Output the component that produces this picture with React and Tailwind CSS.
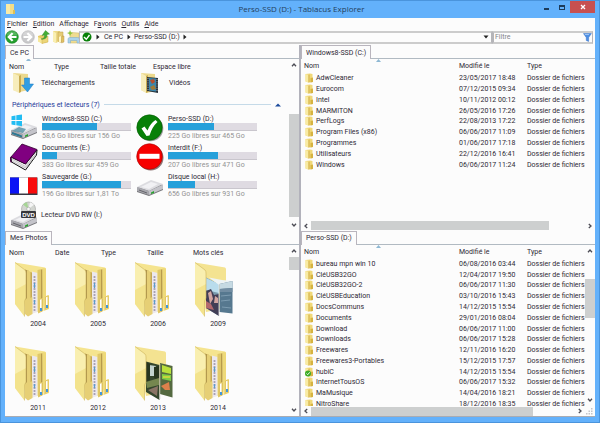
import React, { useState } from "react";

const systemFiles = [
  ["AdwCleaner", "23/05/2017 18:48"],
  ["Eurocom", "07/12/2015 09:34"],
  ["Intel", "10/11/2012 00:12"],
  ["MARMITON", "26/05/2016 17:26"],
  ["PerfLogs", "22/08/2013 17:22"],
  ["Program Files (x86)", "06/06/2017 11:09"],
  ["Programmes", "01/06/2017 17:18"],
  ["Utilisateurs", "22/12/2016 16:41"],
  ["Windows", "06/06/2017 11:24"],
];

const persoFiles = [
  ["bureau mpn win 10", "06/08/2016 03:44"],
  ["CléUSB32GO", "12/04/2017 19:50"],
  ["CléUSB32GO-2", "06/06/2017 11:30"],
  ["CléUSBEducation", "03/10/2016 15:43"],
  ["DocsCommuns", "14/12/2015 15:54"],
  ["Documents", "29/01/2016 08:04"],
  ["Download", "06/06/2017 11:00"],
  ["Downloads", "06/06/2017 15:28"],
  ["Freewares", "12/11/2016 16:20"],
  ["Freewares3-Portables", "15/12/2015 17:57"],
  ["hubiC", "14/12/2015 15:54"],
  ["InternetTousOS", "06/06/2017 15:32"],
  ["MaMusique", "14/04/2016 18:21"],
  ["NitroShare", "18/12/2016 18:35"],
];

const drives = [
  { name: "Windows8-SSD (C:)", info: "58,6 Go libres sur 156 Go", used: 62, icon: WindowsDriveIcon },
  { name: "Perso-SSD (D:)", info: "225 Go libres sur 465 Go", used: 52, icon: CheckIcon },
  { name: "Documents (E:)", info: "383 Go libres sur 459 Go", used: 17, icon: BookIcon },
  { name: "Interdit (F:)", info: "207 Go libres sur 471 Go", used: 56, icon: NoEntryIcon },
  { name: "Sauvegarde (G:)", info: "196 Go libres sur 1,81 To", used: 89, icon: FlagIcon },
  { name: "Disque local (H:)", info: "656 Go libres sur 931 Go", used: 30, icon: DriveIcon },
];

const photos = [
  ["2004", "docs"],
  ["2005", "docs"],
  ["2006", "docs"],
  ["2009", "sea"],
  ["2011", "docs"],
  ["2012", "docs"],
  ["2013", "park"],
  ["2014", "docs"],
];

const menus = [
  ["", "F", "ichier"],
  ["", "E", "dition"],
  ["Aff", "i", "chage"],
  ["F", "a", "voris"],
  ["", "O", "utils"],
  ["", "A", "ide"],
];

/* ---------- icons ---------- */

function DriveShape() {
  return (
    <>
      <path d="M1 20 L15 13 L27 17 L27 22 L13 28 L1 24Z" fill="#77777b" />
      <path d="M1 19 L15 12 L27 16 L13 23Z" fill="#dcdce0" />
      <path d="M5 19 L15 14 L22 16 L13 21Z" fill="#f1f1f4" />
      <path d="M1 19 L13 23 L13 27 L1 23Z" fill="#a8a8ae" />
      <path d="M13 23 L27 16.500 L27 21 L13 27Z" fill="#c4c4ca" />
      <path d="M3 22 L11 25" stroke="#65656b" strokeWidth="1" />
      <path d="M15 24.500 L18 23 L18 25 L15 26Z" fill="#26a32d" />
    </>
  );
}

function DriveIcon() {
  return (
    <svg viewBox="0 0 28 28" className="size-7" aria-hidden="true">
      <g transform="translate(0 -4)">
        <DriveShape />
      </g>
    </svg>
  );
}

function WindowsDriveIcon() {
  return (
    <svg viewBox="0 0 28 28" className="size-7" aria-hidden="true">
      <g transform="translate(0 -3)">
        <DriveShape />
        <path d="M2 20 L9 16 L16 18 L13 22Z" fill="#3f8298" opacity=".7" />
        <path d="M2 21 L12 24.500 L12 26.500 L2 23Z" fill="#2b7995" />
      </g>
      <path d="M1.500 2.200 L5.500 1.500 V6 H1.500Z M6.300 1.300 L12 .4 V6 H6.300Z M1.500 6.900 H5.500 V11.200 L1.500 10.600Z M6.300 6.900 H12 V12.200 L6.300 11.300Z" fill="#22bdf3" />
    </svg>
  );
}

function DvdIcon() {
  return (
    <svg viewBox="0 0 28 28" className="size-7" aria-hidden="true">
      <DriveShape />
      <circle cx="18.500" cy="8" r="7" fill="#d2d5d0" stroke="#9a9a9a" strokeWidth=".6" />
      <path d="M18.500 8 L13 3.500 A7 7 0 0 1 17 1.200Z" fill="#a6d595" />
      <path d="M18.500 8 L20 1.200 A7 7 0 0 1 24 3.800Z" fill="#f5f5f5" />
      <circle cx="18.500" cy="8" r="1.800" fill="#f8f8f8" stroke="#999" strokeWidth=".5" />
      <rect x="11" y="10" width="15" height="7" rx="1" fill="#37373b" />
      <text x="18.500" y="15.800" textAnchor="middle" fontSize="6" fontWeight="700" fontFamily="Liberation Sans, sans-serif" fill="#fff">DVD</text>
    </svg>
  );
}

function CheckIcon() {
  return (
    <svg viewBox="0 0 28 28" className="size-7" aria-hidden="true">
      <circle cx="14.500" cy="14.500" r="12.800" fill="#9b9b9b" />
      <circle cx="13.500" cy="13.500" r="12.700" fill="#078007" stroke="#035c03" strokeWidth=".6" />
      <path d="M5.500 14.500 L8.500 12.500 L11.500 16.500 Q14 9.500 19.500 6 L21.500 8 Q16 13 13.500 21.500 L10.500 22Z" fill="#fff" />
    </svg>
  );
}

function NoEntryIcon() {
  return (
    <svg viewBox="0 0 28 28" className="size-7" aria-hidden="true">
      <circle cx="14.700" cy="14.700" r="12.800" fill="#8d7777" />
      <circle cx="13.500" cy="13.500" r="12.800" fill="#f60000" stroke="#a80000" strokeWidth=".6" />
      <rect x="3.500" y="10.800" width="20" height="5" fill="#fff" />
    </svg>
  );
}

function BookIcon() {
  return (
    <svg viewBox="0 0 28 28" className="size-7" aria-hidden="true" strokeLinejoin="round">
      <path d="M1 14 L15.500 21 L27 7 L26.500 12 L15.500 27 L1.500 19Z" fill="#f3f0f3" stroke="#111" strokeWidth="1" />
      <path d="M2 16 L15.500 23.500 L26 10.500 M2 18 L15.500 25 L26 12" fill="none" stroke="#aaa" strokeWidth=".6" />
      <path d="M1 14 L12 1 L27 6.500 L15.500 21Z" fill="#800080" stroke="#32002f" strokeWidth=".8" />
      <path d="M1 14 Q-.5 17 1.500 19.500" fill="none" stroke="#4f004d" strokeWidth="1.200" />
    </svg>
  );
}

function FlagIcon() {
  return (
    <svg viewBox="0 0 28 28" className="size-7" aria-hidden="true">
      <rect x="0" y="5.500" width="27.500" height="17.500" fill="#383842" />
      <rect x="0" y="5.500" width="9" height="16" fill="#0b14f5" />
      <rect x="9" y="5.500" width="9" height="16" fill="#fff" />
      <rect x="18" y="5.500" width="9" height="16" fill="#f80b0b" />
    </svg>
  );
}

function DownloadFolderIcon() {
  return (
    <svg viewBox="0 0 22 22" className="size-[22px]" aria-hidden="true">
      <path d="M1 1 L16 2 V18 L8 20 L1 18Z" fill="#ecd98d" />
      <path d="M1 1 L7 4 V21 L1 18Z" fill="#f7edbb" />
      <path d="M7 4 L9 3 V20 L7 21Z" fill="#c8ab51" />
      <path d="M12.500 6 H17.500 V12 H21.500 L15.500 20 L9.500 13 H12.500Z" fill="#2f9de2" stroke="#1c78c0" strokeWidth=".5" />
    </svg>
  );
}

function VideoFolderIcon() {
  return (
    <svg viewBox="0 0 22 22" className="size-[22px]" aria-hidden="true">
      <path d="M1 1 L15 2 V19 L7 21 L1 18Z" fill="#ecd98d" />
      <path d="M1 1 L6 4 V21 L1 18Z" fill="#f7edbb" />
      <path d="M6 4 L8 3 V20 L6 21Z" fill="#c8ab51" />
      <path d="M7 5 L18 6 V21 L7 19Z" fill="#28323b" />
      <path d="M9 6 L16 6.500 V19.500 L9 18.500Z" fill="#3a86ad" />
      <path d="M10 8 L14 7 L15 10 L12 12Z" fill="#b64e2c" />
      <path d="M10 15 L14 13 L16 17 L12 18Z" fill="#a27a35" />
      <path d="M8 6 V19 M17 7 V20" stroke="#ddd" strokeWidth=".7" strokeDasharray="1 1.200" />
    </svg>
  );
}

function SmallFolder({ synced }) {
  return (
    <svg viewBox="0 0 9 10" className="h-[10px] w-[9px] shrink-0" aria-hidden="true">
      <path d="M.5 1 L5 .5 L7.500 1 V9 L3.500 9.500 L.5 8.500Z" fill="#f0d878" />
      <path d="M.5 1 L3.500 2 V9.500 L.5 8.500Z" fill="#f8eba4" />
      <path d="M3.500 2 L4.500 1.500 V9.200 L3.500 9.500Z" fill="#cfae49" />
      <path d="M5.500 5 L8 4.500 V9 L5.500 9.500Z" fill="#d6b341" />
      {synced && (
        <>
          <circle cx="3" cy="6.500" r="3" fill="#3dac28" />
          <path d="M1.500 6.500 L2.700 7.700 L4.700 5.300" fill="none" stroke="#fff" strokeWidth=".9" />
        </>
      )}
    </svg>
  );
}

function BigFolder({ kind }) {
  return (
    <svg viewBox="0 0 40 56" className="h-14 w-10" aria-hidden="true">
      {kind === "docs" ? (
        <>
          <path d="M1 .5 L28 5 Q32 5 32 7 V36 L28 50 L12 50Z" fill="#f5e48f" />
          <path d="M11 7.500 L15 9 V52 L11 50Z" fill="#a98f49" />
          <path d="M18 9.500 L23.500 11 V50 L17 52Z" fill="#ece8ee" />
          <path d="M20.500 14 V49" stroke="#a9a1b3" strokeWidth="1.800" strokeDasharray="2 1" />
          <path d="M20.500 21 V26 M20.500 38 V42" stroke="#5c9cc8" strokeWidth="1.300" />
          <path d="M13 8 L18 10.500 V34 L18.500 36 V52 L14 54.500 L11 52 V38 L13 36Z" fill="#e6cf75" />
          <path d="M16.500 10 L18 10.800 V35 L16.500 36Z" fill="#c5a954" />
          <path d="M23.500 8 L28 7 V36 L29 37 V49 L24 51.500Z" fill="#e0c869" />
          <path d="M27 8 L28.500 7 V36 L27 37Z" fill="#b79b4c" />
          <path d="M28.500 6 L32 6.500 V34 L35 33 V47 L29.500 49Z" fill="#eed978" />
          <path d="M25.500 37.500 L28 36.500 V49 L25.500 50Z M31.500 35 L34 34 V46 L31.500 47.200Z" fill="#fff" stroke="#dcbc50" strokeWidth=".8" />
          <path d="M26 46 H28 V49 H26Z M32 43 H34 V46 H32Z" fill="#4196db" />
        </>
      ) : (
        <path d="M1 .5 L28 5 Q32 5 32 7 V46 L12 50Z" fill="#f4e391" />
      )}
      {kind === "sea" && (
        <>
          <path d="M12 15.500 L25 22 V54 L12 46Z" fill="#7a9bad" />
          <path d="M12 16 L25 22 V31 L12 28Z" fill="#b9dcec" />
          <path d="M12 29 L17 27 L20 33 L25 32 V54 L12 46Z" fill="#413e56" />
          <path d="M14 31 L17 29 L19 37 L16 42Z M21 34 L24 36 V41 L20 41Z" fill="#d2a6a2" />
          <path d="M12 39 L17 42 L20 48 L12 46Z" fill="#b2686e" />
          <path d="M15 15.500 L28 18 L38 19 L25 23Z" fill="#eef4f5" />
          <path d="M25.500 22 L38.500 19 V51.500 L25.500 50Z" fill="#56788f" />
          <path d="M25.500 22 L38.500 19 V26 L25.500 27Z" fill="#c6dae3" />
          <path d="M25.500 27 L38.500 26 V30 L25.500 30Z" fill="#728da2" />
          <path d="M27 34 L37 33 M27 39 L36 38 M28 45 L37 46" stroke="#7d9cb1" strokeWidth="1" />
          <path d="M25 22 V54" stroke="#e4e4e5" strokeWidth=".8" />
        </>
      )}
      {kind === "park" && (
        <>
          <path d="M12 15.500 L25.500 19 V54 L12 46Z" fill="#34462d" />
          <path d="M15 19 L22 20 L23 30 L15 30Z" fill="#c3d3cf" />
          <path d="M12 16 L16 18 V34 L12 36Z M20 21 L25 20 V34 L20 32Z" fill="#27351f" />
          <path d="M12 36 L25 32 V39 L13 42Z" fill="#75874f" />
          <path d="M14 44 L24 40 L23 50Z" fill="#897365" />
          <path d="M26 17 L38.500 20 V51.500 L26 48Z" fill="#546940" />
          <path d="M28 19 L37 22 V28 L28 26Z" fill="#b9e03c" />
          <path d="M28 28 L37 29 V35 L28 33Z" fill="#7fce45" />
          <path d="M27 40 L35 36 L36 44 L31 44Z" fill="#de804b" />
          <path d="M29 31 H36" stroke="#f6dc38" strokeWidth="1.200" />
          <path d="M25.800 18 V53" stroke="#d1cfc6" strokeWidth=".8" />
        </>
      )}
      <path d="M1 .5 L11 8 Q12 9 12 11 V36 L10.500 39 V54.500 L1 42Z" fill="#f9efb0" />
      <path d="M1 28 L12 22 V36 L10.500 39 V54.500 L1 42Z" fill="#efda76" opacity=".6" />
      <path d="M1 .5 L11 8 Q12 9 12 11 V36 L10.500 39 V54.500" fill="none" stroke="#cdb45b" strokeWidth=".6" />
    </svg>
  );
}

function NavIcon({ flip, active }) {
  return (
    <svg viewBox="0 0 14 14" className="size-[14px]" aria-hidden="true">
      <circle cx="7" cy="7" r="6.300" fill={active ? "#25a02f" : "#c9c9cb"} stroke={active ? "#16821f" : "#b4b4b6"} strokeWidth=".6" />
      <path d="M1.500 5.500 A5.700 5.700 0 0 1 12.500 5.500Z" fill="#fff" opacity=".22" />
      <path transform={flip ? "rotate(180 7 7)" : undefined} d="M2.200 7 L6.800 2.400 L8.400 3.800 L6.300 5.900 H11.500 V8.100 H6.300 L8.400 10.200 L6.800 11.600Z" fill="#fff" />
    </svg>
  );
}

function FolderUpIcon() {
  return (
    <svg viewBox="0 0 13 14" className="h-[14px] w-[13px]" aria-hidden="true">
      <path d="M1 6 L4 5 L10 6 L11 12 L5 13.500 L1 11Z" fill="#e6ca67" />
      <path d="M1 7 L5 9 V13.500 L1 11.500Z" fill="#f7e99a" />
      <path d="M5 9 L11 6 V12 L5 13.500Z" fill="#ecd679" stroke="#c7a43e" strokeWidth=".4" />
      <path d="M4 9 Q8 9 7.500 5 L5 5.500 L8.500 .5 L12.500 4 L10 4.500 Q10 10 4 9Z" fill="#45ad36" stroke="#27841f" strokeWidth=".4" />
    </svg>
  );
}

function FoldersIcon() {
  return (
    <svg viewBox="0 0 13 14" className="h-[14px] w-[13px]" aria-hidden="true">
      <path d="M1 1 L8 1 V11 L4 13 L1 11.500Z" fill="#edd987" />
      <path d="M1 1 L4 3 V13 L1 11.500Z" fill="#f9efb3" />
      <path d="M6 2 L11 2 V11 L8 12.500 L6 11Z" fill="#e5cc76" stroke="#bf9e4b" strokeWidth=".5" />
      <path d="M10 6 L12 6 V12 L9.500 13Z" fill="#e4c566" stroke="#ab8a3e" strokeWidth=".4" />
      <path d="M7 7 L9 6 V12 L7 13Z" fill="#fff5c7" />
    </svg>
  );
}

function NewFolderIcon() {
  return (
    <svg viewBox="0 0 13 14" className="h-[14px] w-[13px]" aria-hidden="true">
      <path d="M3 4 L5 2.500 L12 3 V13 H3Z" fill="#efdc91" stroke="#cbb463" strokeWidth=".5" />
      <path d="M1 9 Q1 7.500 3 7.500 H10.500 Q12.500 7.500 12.500 9 V13 H10 V10.500 H3.500 V13 H1Z" fill="#a9d3ec" stroke="#78a9c8" strokeWidth=".5" />
      <path d="M3 0 L4 2.200 L6 3 L4 4 L3 6 L2.200 4 L0 3 L2.200 2.200Z" fill="#8dc63d" />
    </svg>
  );
}

function Chevron({ dir }) {
  const turn = { up: 0, right: 90, down: 180, left: 270 }[dir];
  return (
    <svg viewBox="0 0 6 6" className="size-[6px]" aria-hidden="true">
      <path transform={`rotate(${turn} 3 3)`} d="M1 4.200 L3 2 L5 4.200" fill="none" stroke="#4c4c55" strokeWidth="1.300" />
    </svg>
  );
}

function Triangle() {
  return (
    <svg viewBox="0 0 4 6" className="h-[6px] w-1" aria-hidden="true">
      <path d="M.5 .5 L3.500 3 L.5 5.500Z" fill="#222" />
    </svg>
  );
}

/* ---------- shared pieces ---------- */

function VerticalScroll({ before, thumb, after }) {
  return (
    <div className="flex w-[10px] shrink-0 flex-col items-center bg-[#fcfcfc]">
      <button aria-label="Défiler vers le haut" className="flex h-3 w-full items-center justify-center">
        <Chevron dir="up" />
      </button>
      <div className="flex w-full grow flex-col">
        <div className={before} />
        <div className={`w-full bg-[#cdcfcf] ${thumb}`} />
        <div className={after} />
      </div>
      <button aria-label="Défiler vers le bas" className="flex h-3 w-full items-center justify-center">
        <Chevron dir="down" />
      </button>
    </div>
  );
}

function HorizontalScroll({ thumb, grip }) {
  return (
    <div className="flex h-[10px] shrink-0 items-center">
      <button aria-label="Défiler vers la gauche" className="flex h-full w-[10px] items-center justify-center">
        <Chevron dir="left" />
      </button>
      <div className="h-[9px] grow">
        <div className={`h-full bg-[#cdcfcf] ${thumb}`} />
      </div>
      <button aria-label="Défiler vers la droite" className="flex h-full w-[10px] items-center justify-center">
        <Chevron dir="right" />
      </button>
      {grip && (
        <svg viewBox="0 0 10 10" className="size-[10px]" aria-hidden="true">
          <path d="M6 2h1.500v1.500H6zM6 4.500h1.500V6H6zM3.500 4.500H5V6H3.500zM6 7h1.500v1.500H6zM3.500 7H5v1.500H3.500zM1 7h1.500v1.500H1z" fill="#c4c4c8" />
        </svg>
      )}
    </div>
  );
}

function Pane({ tab, children }) {
  return (
    <section className="flex min-h-0 flex-1 flex-col">
      <div className="flex h-[14px] shrink-0 border-b border-[#b1bac2]">
        <button className="-mb-px border border-b-0 border-[#b9b5bd] bg-[#fcfcfc] px-1 leading-3">
          {tab}
        </button>
      </div>
      {children}
    </section>
  );
}

function FileTable({ rows, height }) {
  return (
    <table className={`w-full table-fixed border-collapse ${height}`}>
      <colgroup>
        <col className="w-[154px]" />
        <col className="w-[68px]" />
        <col />
      </colgroup>
      <thead>
        <tr className="h-[14px] text-left">
          <th className="relative pl-[3px] font-normal">
            <span className="absolute inset-x-0 top-0 flex justify-center">
              <svg viewBox="0 0 5 3" className="h-[3px] w-[5px]" aria-hidden="true">
                <path d="M0 3 L2.500 0 L5 3Z" fill="#8eb8d3" />
              </svg>
            </span>
            Nom
          </th>
          <th className="pl-1 font-normal">Modifié le</th>
          <th className="pl-1 font-normal">Type</th>
        </tr>
      </thead>
      <tbody>
        {rows.map(([name, date]) => (
          <tr key={name} className="leading-[10px] whitespace-nowrap">
            <td className="p-0 pl-1">
              <span className="flex items-center gap-0.5">
                <SmallFolder synced={name === "hubiC"} />
                {name}
              </span>
            </td>
            <td className="p-0 pl-1">{date}</td>
            <td className="p-0 pl-1">Dossier de fichiers</td>
          </tr>
        ))}
      </tbody>
    </table>
  );
}

function Tile({ drive }) {
  const Icon = drive.icon;
  return (
    <li className="flex h-[29px] items-center gap-1">
      <Icon />
      <div className="w-[89px]">
        <p className="leading-[8px]">{drive.name}</p>
        <div className="h-2 border-b border-[#c9c6cd] bg-[#dfdbe2]">
          <div className="h-[7px] bg-[#26a0da]" style={{ width: `${drive.used}%` }} />
        </div>
        <p className="leading-[10px] whitespace-nowrap text-[#929292]">{drive.info}</p>
      </div>
    </li>
  );
}

/* ---------- window ---------- */

function TitleBar() {
  return (
    <header className="flex h-[17px] shrink-0 items-start">
      <div className="flex w-[60px] pt-[3px]">
        <svg viewBox="0 0 10 10" className="size-[10px]" aria-hidden="true">
          <path d="M1 0 H9 V10 H1Z" fill="#f3dd86" />
          <path d="M1 0 H5 V10 H1Z" fill="#f9eaa6" />
          <path d="M8 6 H10 V10 H8Z" fill="#dfbf56" />
        </svg>
      </div>
      <h1 className="grow text-center font-['Open_Sans','Noto_Sans',sans-serif] text-[8px] leading-4 text-[#243f5c]">
        Perso-SSD (D:) - Tablacus Explorer
      </h1>
      <div className="flex">
        <button aria-label="Réduire" className="flex h-3 w-4 items-center justify-center pt-1">
          <span className="h-0.5 w-[5px] bg-[#1d3b5a]" />
        </button>
        <button aria-label="Agrandir" className="flex h-3 w-4 items-center justify-center">
          <span className="h-[5px] w-[6px] border border-t-2 border-[#1d3b5a]" />
        </button>
        <button aria-label="Fermer" className="flex h-3 w-[25px] items-center justify-center bg-[#c75050]">
          <svg viewBox="0 0 6 6" className="size-[6px]" aria-hidden="true">
            <path d="M1 1 L5 5 M5 1 L1 5" stroke="#fff" strokeWidth="1.300" />
          </svg>
        </button>
      </div>
    </header>
  );
}

function Toolbar() {
  const [filter, setFilter] = useState("");

  return (
    <div className="flex h-[14px] shrink-0 items-center pr-0.5">
      <div className="flex w-[74px] shrink-0 items-center gap-0.5">
        <button aria-label="Précédent"><NavIcon active /></button>
        <button aria-label="Suivant"><NavIcon flip /></button>
        <button aria-label="Dossier parent"><FolderUpIcon /></button>
        <button aria-label="Dossiers"><FoldersIcon /></button>
        <button aria-label="Nouveau dossier"><NewFolderIcon /></button>
      </div>
      <nav className="flex h-[13px] grow items-center border-x border-y-2 border-y-[#cccccc] border-x-[#b5b5b9] pl-0.5" aria-label="Adresse">
        <svg viewBox="0 0 10 10" className="mr-1 size-[10px]" aria-hidden="true">
          <circle cx="5" cy="5" r="4.500" fill="#078007" />
          <path d="M2 5 L4.300 7.300 L7.500 3" fill="none" stroke="#fff" strokeWidth="1.400" />
        </svg>
        <Triangle />
        <a href="#ce-pc" className="mx-1">Ce PC</a>
        <Triangle />
        <a href="#perso-ssd" className="mx-[3px]">Perso-SSD (D:)</a>
        <Triangle />
        <button aria-label="Historique" className="mr-0.5 ml-auto">
          <svg viewBox="0 0 6 4" className="h-1 w-[6px]" aria-hidden="true">
            <path d="M.5 .5 H5.500 L3 3.500Z" fill="#222" />
          </svg>
        </button>
      </nav>
      <div className="flex h-[13px] w-[101px] shrink-0 items-center border-2 border-r border-y-[#cccccc] border-x-[#b5b5b9]">
        <input
          type="text"
          aria-label="Filtre"
          placeholder="Filtre"
          value={filter}
          onChange={(e) => setFilter(e.target.value)}
          className="h-[9px] min-w-0 grow bg-transparent pl-px leading-[9px] outline-none placeholder:text-[#85858b]"
        />
        <svg viewBox="0 0 9 9" className="size-[9px]" aria-hidden="true">
          <path d="M.5 .5 H8.500 L5.700 4.500 V8.500 L3.300 7.500 V4.500Z" fill="#4d8fe4" stroke="#3671c6" strokeWidth=".5" />
          <path d="M2 1.500 H6" stroke="#b5d4fa" strokeWidth=".8" />
        </svg>
      </div>
    </div>
  );
}

function ComputerPane() {
  return (
    <Pane tab="Ce PC">
      <div className="flex min-h-0 grow">
        <div className="min-w-0 grow overflow-hidden">
          <div className="flex h-[15px] items-center pl-1">
            <button className="relative w-[45px] text-left">
              Nom
              <svg viewBox="0 0 5 3" className="absolute -top-1 left-[17px] h-[3px] w-[5px]" aria-hidden="true">
                <path d="M0 3 L2.500 0 L5 3Z" fill="#8eb8d3" />
              </svg>
            </button>
            <button className="w-[46px] text-left">Type</button>
            <button className="w-[53px] text-left">Taille totale</button>
            <button className="text-left">Espace libre</button>
          </div>
          <ul className="flex h-[22px] items-center pl-[7px]">
            <li className="flex w-32 items-center gap-[7px] pb-1">
              <DownloadFolderIcon />
              Téléchargements
            </li>
            <li className="flex items-center gap-[7px] pb-1">
              <VideoFolderIcon />
              Vidéos
            </li>
          </ul>
          <div className="flex h-[17px] items-center gap-1 pr-2 pl-[7px]">
            <h2 className="text-[#1e3a9a]">Périphériques et lecteurs (7)</h2>
            <span className="h-px grow bg-[#c5dae8]" />
            <svg viewBox="0 0 6 4" className="h-1 w-[6px]" aria-hidden="true">
              <path d="M0 3.500 L3 .5 L6 3.500Z" fill="#1c4a9c" />
            </svg>
          </div>
          <ul className="grid grid-cols-[126px_126px] pl-[5px]">
            {drives.map((drive) => (
              <Tile key={drive.name} drive={drive} />
            ))}
            <li className="flex items-center gap-[3px] pt-px">
              <DvdIcon />
              <span className="whitespace-nowrap">Lecteur DVD RW (I:)</span>
            </li>
          </ul>
        </div>
        <VerticalScroll before="grow-[43]" thumb="grow-[103]" after="grow-[1]" />
      </div>
    </Pane>
  );
}

function PhotosPane() {
  return (
    <Pane tab="Mes Photos">
      <div className="flex min-h-0 grow">
        <div className="min-w-0 grow overflow-hidden">
          <div className="flex h-[17px] items-center pl-1">
            {["Nom", "Date", "Type", "Taille", "Mots clés"].map((label) => (
              <button key={label} className="w-[46px] text-left">{label}</button>
            ))}
          </div>
          <ul className="grid grid-cols-[60px_60px_60px_60px] gap-y-4 pl-[9px]">
            {photos.map(([year, kind]) => (
              <li key={year} className="flex h-[68px] flex-col">
                <BigFolder kind={kind} />
                <span className="w-12 text-center leading-3">{year}</span>
              </li>
            ))}
          </ul>
        </div>
        <VerticalScroll before="hidden" thumb="h-[13px]" after="grow" />
      </div>
    </Pane>
  );
}

export default function App() {
  return (
    <div className="flex h-screen flex-col border border-[#4a94dc] bg-[#63b1fb] px-1 pb-[5px] font-[Roboto,'Noto_Sans',sans-serif] text-[7px] leading-[10px] text-[#2d2834]">
      <TitleBar />
      <main className="flex min-h-0 grow flex-col bg-[#fcfcfc]">
        <nav className="flex h-3 shrink-0 items-center gap-[5px] pl-0.5" aria-label="Menu">
          {menus.map(([before, key, after]) => (
            <button key={after}>
              {before}<u>{key}</u>{after}
            </button>
          ))}
        </nav>
        <Toolbar />
        <div className="flex min-h-0 grow border-b border-[#a9acb3] pt-px">
          <div className="flex min-w-0 flex-1 flex-col">
            <ComputerPane />
            <PhotosPane />
          </div>
          <div className="flex min-w-0 flex-1 flex-col border-l-2 border-[#b2b2bb]">
            <Pane tab="Windows8-SSD (C:)">
              <div className="min-h-0 grow overflow-hidden">
                <FileTable rows={systemFiles} height="h-[111px]" />
              </div>
              <HorizontalScroll thumb="w-[87%]" />
            </Pane>
            <Pane tab="Perso-SSD (D:)">
              <div className="flex min-h-0 grow">
                <div className="min-w-0 grow overflow-hidden">
                  <FileTable rows={persoFiles} height="h-[165px]" />
                </div>
                <VerticalScroll before="grow-[22]" thumb="grow-[38]" after="grow-[75]" />
              </div>
              <HorizontalScroll thumb="w-[84%]" grip />
            </Pane>
          </div>
        </div>
      </main>
    </div>
  );
}
